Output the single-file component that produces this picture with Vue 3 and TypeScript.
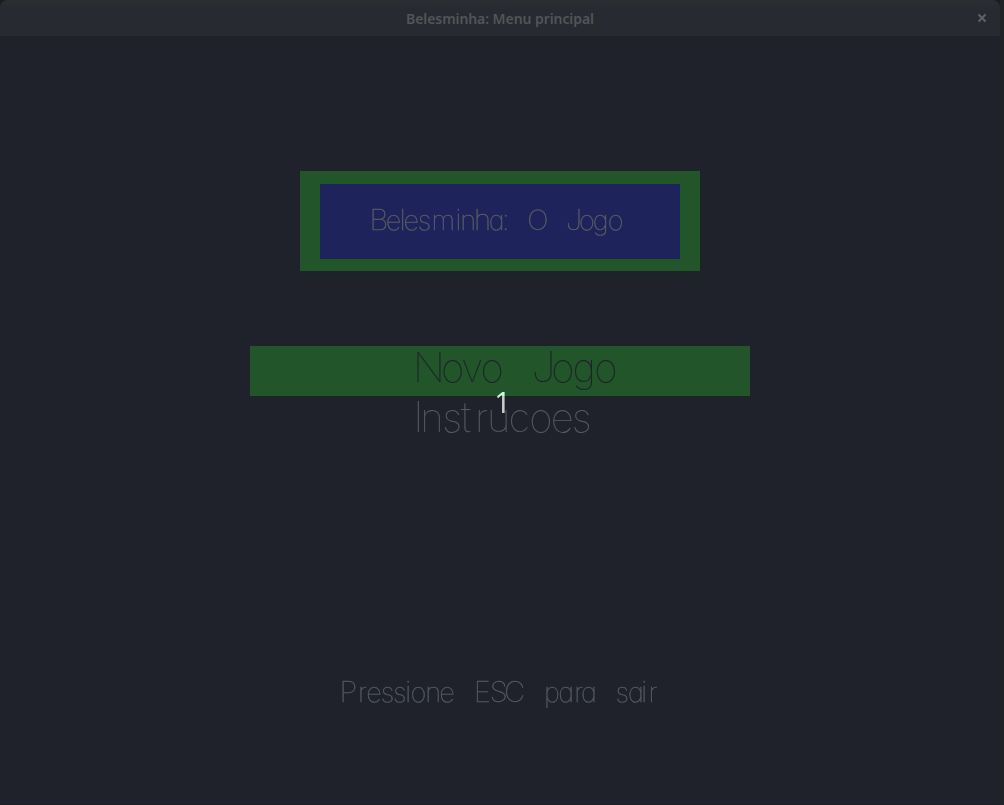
<script setup lang="ts">
interface Label {
  text: string
  y: number
  kind: string
  xs: number[]
}

// Glyphs are drawn slightly extended; positions are divided by the same factor.
const STRETCH = 1.03

const labels: Label[] = [
  { text: 'Belesminha:', y: 230, kind: 'title', xs: [378.8, 393.7, 402.7, 411.3, 424.5, 443.2, 458.3, 468.2, 482.7, 496.8, 505.8] },
  { text: 'O', y: 230, kind: 'title', xs: [538] },
  { text: 'Jogo', y: 230, kind: 'title', xs: [574, 587, 600.8, 615.7] },
  { text: 'Novo', y: 382, kind: 'item active', xs: [429, 452.7, 472.2, 492.2] },
  { text: 'Jogo', y: 382, kind: 'item active', xs: [543.5, 562.8, 584.2, 605.8] },
  { text: 'Instrucoes', y: 432, kind: 'item', xs: [418.5, 432, 452.2, 466, 481.5, 498.7, 519.3, 541, 562.2, 581.7] },
  { text: 'Pressione', y: 702, kind: 'hint', xs: [348.5, 362.5, 374, 387.5, 399.7, 408.3, 418.3, 433.3, 447] },
  { text: 'ESC', y: 702, kind: 'hint', xs: [482.3, 498.7, 514.5] },
  { text: 'para', y: 702, kind: 'hint', xs: [552, 566.2, 578.7, 588.9] },
  { text: 'sair', y: 702, kind: 'hint', xs: [622.3, 635.9, 644.3, 653] },
]

// Letters without an ascender sit on a lower x-height.
const isLow = (ch: string): boolean => 'acegmnoprsuv'.includes(ch)
const glyphX = (x: number): string => (x / STRETCH).toFixed(2)
</script>

<template>
  <div class="desktop">
    <div class="window">
      <header class="titlebar">
        <span class="caption">Belesminha: Menu principal</span>
        <svg class="close" width="10" height="10" viewBox="0 0 10 10">
          <path d="M1.5 1.5 8.5 8.5M8.5 1.5 1.5 8.5" />
        </svg>
      </header>
      <svg class="scene" width="1000" height="768" viewBox="0 36 1000 768">
        <defs>
          <linearGradient id="counter" gradientUnits="userSpaceOnUse" x1="0" y1="392" x2="0" y2="413">
            <stop offset="0.17" stop-color="#caffd0" />
            <stop offset="0.21" stop-color="#c9cccb" />
          </linearGradient>
        </defs>
        <g shape-rendering="crispEdges">
          <rect x="300" y="171" width="400" height="100" class="green" />
          <rect x="320" y="184" width="360" height="75" class="blue" />
          <rect x="250" y="346" width="500" height="50" class="green" />
        </g>
        <g :transform="`scale(${STRETCH} 1)`">
          <text
            v-for="(label, i) in labels"
            :key="i"
            :class="['label', label.kind]"
            :y="label.y"
          ><tspan v-for="(ch, j) in label.text.split('')" :key="j" :x="glyphX(label.xs[j])" :class="{ low: isLow(ch), wide: ch === 'O' || ch === 'N' }">{{ ch }}</tspan></text>
        </g>
        <text class="counter" x="502.5" y="413" fill="url(#counter)">1</text>
      </svg>
    </div>
    <div class="edge"></div>
  </div>
</template>

<style scoped>
.desktop {
  display: flex;
  width: 1004px;
  height: 805px;
  overflow: hidden;
  background: #1b1d20;
}
.window {
  width: 1000px;
  height: 804px;
  flex: none;
  background: #1f222a;
  border-radius: 8px 8px 0 0;
  overflow: hidden;
}
.edge {
  width: 4px;
  background: #202427;
}
.titlebar {
  position: relative;
  display: flex;
  align-items: center;
  justify-content: center;
  height: 36px;
  background: linear-gradient(#2a2d30, #272a31 10px);
}
.caption {
  font: 600 14px/36px "Noto Sans", sans-serif;
  letter-spacing: -0.07px;
  padding-top: 2px;
  color: #525557;
}
.close {
  position: absolute;
  right: 13px;
  top: 13px;
}
.close path {
  stroke: #5f6264;
  stroke-width: 2;
}
.scene {
  display: block;
  will-change: transform;
}
.green {
  fill: #225529;
}
.blue {
  fill: #1f235c;
}
.label {
  font-family: Inter, "Open Sans", sans-serif;
  font-weight: 100;
  font-feature-settings: "cv11" 1;
  text-anchor: middle;
}
.low {
  font-size: 0.93em;
}
.wide {
  font-size: 0.97em;
}
.title {
  font-size: 28.5px;
  fill: #585d60;
  stroke: #585d60;
  stroke-width: 0.4px;
}
.item {
  font-size: 42px;
  fill: #555961;
  stroke: #555961;
  stroke-width: 0.15px;
}
.active {
  fill: #1f222a;
  stroke: #1f222a;
}
.hint {
  font-size: 28.5px;
  fill: #555961;
  stroke: #555961;
  stroke-width: 0.4px;
}
.counter {
  font: 400 29px "Noto Sans", sans-serif;
  text-anchor: middle;
}
</style>
<style>
body {
  margin: 0;
  background: #1b1d20;
}
</style>
